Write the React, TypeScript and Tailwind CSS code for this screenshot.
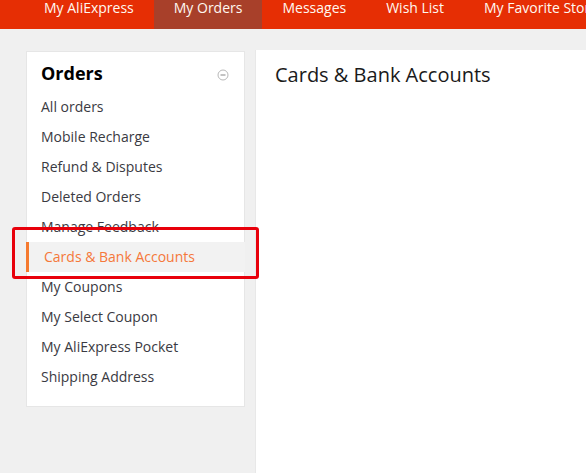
import React from "react";

const tabs = ["My AliExpress", "My Orders", "Messages", "Wish List", "My Favorite Stores"];
const items = [
  "All orders",
  "Mobile Recharge",
  "Refund & Disputes",
  "Deleted Orders",
  "Manage Feedback",
  "Cards & Bank Accounts",
  "My Coupons",
  "My Select Coupon",
  "My AliExpress Pocket",
  "Shipping Address",
];

export default function App() {
  return (
    <div
      className="relative h-[473px] w-[586px] overflow-hidden bg-[#f0f0f0] flex flex-col"
      style={{ fontFamily: '"Open Sans", "Liberation Sans", sans-serif' }}
    >
      <div className="h-[29px] bg-[#e62e04] flex items-start pl-[24px] whitespace-nowrap shrink-0">
        {tabs.map((t) => (
          <div
            key={t}
            className={`h-full px-[20px] text-[14px] leading-[15px] text-[#fff8f0] ${
              t === "My Orders" ? "bg-[#a8402a]" : ""
            }`}
          >
            {t}
          </div>
        ))}
      </div>
      <div className="flex flex-1 items-start pl-[26px] pt-[21px] gap-[10px]">
        <div className="mt-[1px] w-[219px] bg-white border border-[#e6e6e6] pt-[9px] pb-[14px]">
          <div className="flex items-center justify-between pl-[14px] pr-[15px] mb-[7px]">
            <span className="text-[18px] leading-[24px] font-bold text-black">Orders</span>
            <svg width="12" height="12" viewBox="0 0 12 12" className="mt-[3px]">
              <circle cx="6" cy="6" r="5" fill="none" stroke="#b8b8b8" strokeWidth="1" />
              <line x1="3.5" y1="6" x2="8.5" y2="6" stroke="#9a9a9a" strokeWidth="1.2" />
            </svg>
          </div>
          {items.map((it) =>
            it === "Cards & Bank Accounts" ? (
              <div
                key={it}
                className="-ml-[1px] -mr-[1px] h-[30px] bg-[#f2f2f2] border-l-[3px] border-[#f57a2f] pl-[15px] text-[14px] leading-[30px] text-[#f5783a]"
              >
                {it}
              </div>
            ) : (
              <div key={it} className="h-[30px] pl-[14px] text-[14px] leading-[30px] text-[#3a3a42]">
                {it}
              </div>
            )
          )}
        </div>
        <div className="flex-1 self-stretch bg-white border-l border-[#e8e8e8] pl-[19px] pt-[11px]">
          <div className="text-[20px] leading-[28px] text-[#1a1a1a]">Cards &amp; Bank Accounts</div>
        </div>
      </div>
      <div className="absolute left-[12px] top-[227px] w-[247px] h-[52px] border-[3px] border-[#e8000b] rounded-[3px]" />
    </div>
  );
}
